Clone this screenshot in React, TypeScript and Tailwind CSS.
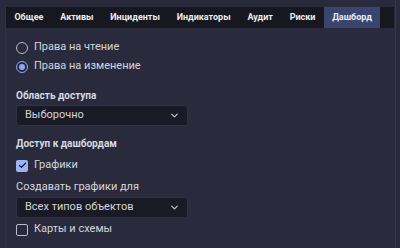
import { ChevronDown, Check } from 'lucide-react';

const tabs = ['Общее', 'Активы', 'Инциденты', 'Индикаторы', 'Аудит', 'Риски', 'Дашборд'];

function Radio({ label, checked }: { label: string; checked?: boolean }) {
  return (
    <label className="flex items-center gap-[6px] h-[19px]">
      <span
        className={`w-[12px] h-[12px] rounded-full border-[1.5px] flex items-center justify-center ${
          checked ? 'border-[#8fa6f0]' : 'border-[#b8bac4]'
        }`}
      >
        {checked && <span className="w-[6px] h-[6px] rounded-full bg-[#8fa6f0]" />}
      </span>
      <span className="text-[11px] text-[#d4d5dc]">{label}</span>
    </label>
  );
}

function Checkbox({ label, checked }: { label: string; checked?: boolean }) {
  return (
    <label className="flex items-center gap-[6px] h-[19px]">
      <span
        className={`w-[12px] h-[12px] rounded-[2px] flex items-center justify-center ${
          checked ? 'bg-[#9cb2f5]' : 'border-[1.5px] border-[#b8bac4]'
        }`}
      >
        {checked && <Check className="w-[9px] h-[9px] text-[#1a1b26]" strokeWidth={3.5} />}
      </span>
      <span className="text-[11px] text-[#d4d5dc]">{label}</span>
    </label>
  );
}

function Select({ value }: { value: string }) {
  return (
    <div className="w-[172px] h-[21px] rounded-[3px] bg-[#191a25] border border-[#2f3142] flex items-center justify-between pl-[8px] pr-[7px]">
      <span className="text-[11px] text-[#d4d5dc]">{value}</span>
      <ChevronDown className="w-[11px] h-[11px] text-[#b8bac4]" strokeWidth={3} />
    </div>
  );
}

export default function App() {
  return (
    <div
      className="relative w-[400px] h-[248px] bg-[#292b3d] pt-[7px] pl-[5px] pr-[6px] overflow-hidden"
      style={{ fontFamily: 'Roboto, "Noto Sans", sans-serif' }}
    >
      <div className="h-full border-l border-[#2f3246]">
        {/* Tabs */}
        <div className="flex h-[21px] bg-[#16171f]">
          {tabs.map((t) => (
            <div
              key={t}
              className={`px-[8.4px] flex items-center text-[9px] font-bold text-[#ececf2] ${
                t === 'Дашборд' ? 'bg-[#3a456f]' : ''
              }`}
            >
              {t}
            </div>
          ))}
        </div>

        {/* Body */}
        <div className="pl-[10px] pt-[10px] flex flex-col">
          <Radio label="Права на чтение" />
          <Radio label="Права на изменение" checked />

          <div className="mt-[14px] leading-[12px] text-[10px] font-bold text-[#d8d9e0]">Область доступа</div>
          <div className="mt-[3px]">
            <Select value="Выборочно" />
          </div>

          <div className="mt-[12px] leading-[12px] text-[10px] font-bold text-[#d8d9e0]">Доступ к дашбордам</div>
          <div className="mt-[6px]">
            <Checkbox label="Графики" checked />
          </div>
          <div className="mt-[5px] leading-[14px] text-[11px] text-[#d4d5dc]">Создавать графики для</div>
          <div className="mt-[3px]">
            <Select value="Всех типов объектов" />
          </div>
          <div className="mt-[2px]">
            <Checkbox label="Карты и схемы" />
          </div>
        </div>
      </div>
      <div className="absolute top-0 left-[395px] w-[1px] h-[248px] bg-[#34374b]" />
    </div>
  );
}
